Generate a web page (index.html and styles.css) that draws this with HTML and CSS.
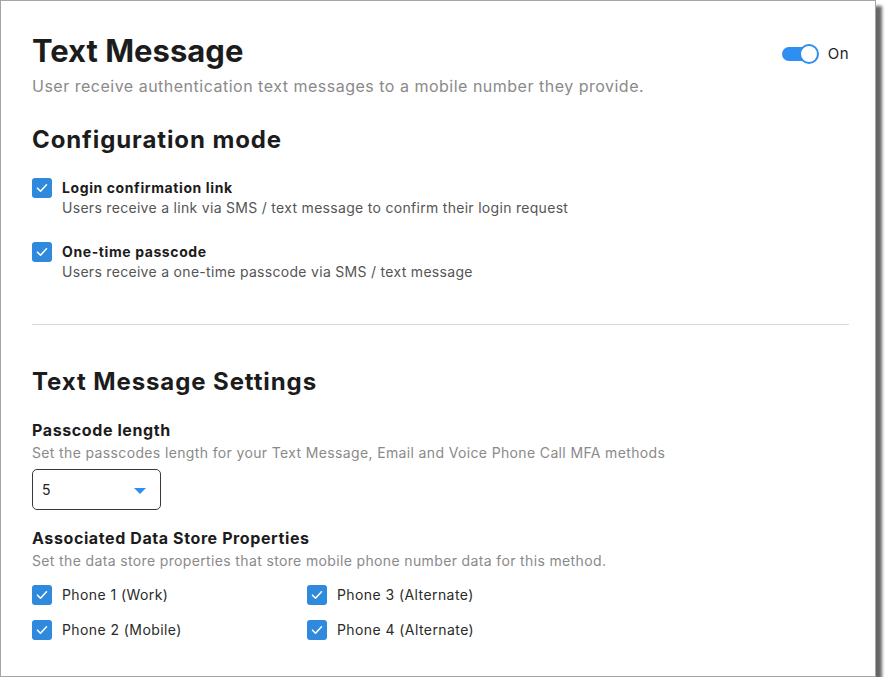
FILE: index.html
```html
<!DOCTYPE html>
<html lang="en">
<head>
    <meta charset="UTF-8">
    <title>Text Message MFA</title>
    <link rel="stylesheet" href="styles.css">
</head>
<body>
    <div class="card">
        <!-- Cabecera con el interruptor -->
        <header class="card-header">
            <div>
                <h1 class="title">Text Message</h1>
                <p class="subtitle">User receive authentication text messages to a mobile number they provide.</p>
            </div>
            <div class="toggle">
                <span class="toggle-track"><span class="toggle-knob"></span></span>
                <span class="toggle-label">On</span>
            </div>
        </header>

        <section class="config">
            <h2 class="section-title">Configuration mode</h2>

            <div class="option">
                <span class="checkbox">
                    <svg viewBox="0 0 20 20"><path d="M5.5 10.2l3 3 6-6.4"/></svg>
                </span>
                <div>
                    <p class="option-title">Login confirmation link</p>
                    <p class="option-desc">Users receive a link via SMS / text message to confirm their login request</p>
                </div>
            </div>

            <div class="option">
                <span class="checkbox">
                    <svg viewBox="0 0 20 20"><path d="M5.5 10.2l3 3 6-6.4"/></svg>
                </span>
                <div>
                    <p class="option-title">One-time passcode</p>
                    <p class="option-desc">Users receive a one-time passcode via SMS / text message</p>
                </div>
            </div>
        </section>

        <hr class="divider">

        <section class="settings">
            <h2 class="section-title">Text Message Settings</h2>

            <div class="field">
                <h3 class="field-title">Passcode length</h3>
                <p class="field-help">Set the passcodes length for your Text Message, Email and Voice Phone Call MFA methods</p>
                <div class="select">
                    <span>5</span>
                    <span class="select-arrow"></span>
                </div>
            </div>

            <div class="field field-props">
                <h3 class="field-title">Associated Data Store Properties</h3>
                <p class="field-help">Set the data store properties that store mobile phone number data for this method.</p>
                <div class="phone-grid">
                    <label class="phone">
                        <span class="checkbox"><svg viewBox="0 0 20 20"><path d="M5.5 10.2l3 3 6-6.4"/></svg></span>
                        Phone 1 (Work)
                    </label>
                    <label class="phone">
                        <span class="checkbox"><svg viewBox="0 0 20 20"><path d="M5.5 10.2l3 3 6-6.4"/></svg></span>
                        Phone 3 (Alternate)
                    </label>
                    <label class="phone">
                        <span class="checkbox"><svg viewBox="0 0 20 20"><path d="M5.5 10.2l3 3 6-6.4"/></svg></span>
                        Phone 2 (Mobile)
                    </label>
                    <label class="phone">
                        <span class="checkbox"><svg viewBox="0 0 20 20"><path d="M5.5 10.2l3 3 6-6.4"/></svg></span>
                        Phone 4 (Alternate)
                    </label>
                </div>
            </div>
        </section>
    </div>
</body>
</html>
```

FILE: styles.css
```css
/* Reset */
* {
    margin: 0;
    padding: 0;
    box-sizing: border-box;
}

body {
    font-family: 'Inter', 'Liberation Sans', sans-serif;
    background: #ffffff;
    color: #222;
}

/* Tarjeta principal */
.card {
    width: 876px;
    height: 677px;
    background: #ffffff;
    border: 1px solid #a5a5a5;
    box-shadow: 6px 6px 3px rgba(0, 0, 0, 0.6);
    padding: 31px 26px 0 31px;
}

.card-header {
    display: flex;
    justify-content: space-between;
    align-items: flex-start;
}

.title {
    font-size: 31px;
    line-height: 38px;
    font-weight: 700;
    color: #1c1c1c;
}

.subtitle {
    margin-top: 5px;
    font-size: 16px;
    line-height: 22px;
    letter-spacing: 0.5px;
    color: #8a8a8a;
}

/* Interruptor */
.toggle {
    display: flex;
    align-items: center;
    gap: 10px;
    margin-top: 12px;
}

.toggle-track {
    position: relative;
    width: 36px;
    height: 14px;
    border-radius: 7px;
    background: #2f8ff0;
}

.toggle-knob {
    position: absolute;
    right: -1px;
    top: -3px;
    width: 20px;
    height: 20px;
    border-radius: 50%;
    background: #fff;
    border: 2px solid #2f8ff0;
}

.toggle-label {
    font-size: 15px;
    letter-spacing: 0.4px;
    color: #222;
}

/* Titulos de seccion */
.section-title {
    font-size: 24px;
    line-height: 30px;
    font-weight: 700;
    letter-spacing: 0.9px;
    color: #1c1c1c;
}

.config {
    margin-top: 28px;
}

.option {
    display: flex;
    gap: 10px;
    margin-top: 24px;
}

.config .section-title + .option {
    margin-top: 23px;
}

.checkbox {
    flex: none;
    width: 20px;
    height: 20px;
    border-radius: 3px;
    background: #2f89dc;
    display: flex;
}

.checkbox svg {
    width: 20px;
    height: 20px;
    fill: none;
    stroke: #fff;
    stroke-width: 1.6;
    stroke-linecap: round;
    stroke-linejoin: round;
}

.option-title {
    font-size: 14px;
    line-height: 20px;
    font-weight: 700;
    letter-spacing: 0.6px;
    color: #1c1c1c;
}

.option-desc {
    font-size: 14px;
    line-height: 20px;
    letter-spacing: 0.3px;
    color: #555;
}

.divider {
    border: none;
    border-top: 1px solid #d6dadd;
    margin-top: 42px;
}

.settings {
    margin-top: 42px;
}

.field {
    margin-top: 22px;
}

.field-props {
    margin-top: 17px;
}

.field-title {
    font-size: 16px;
    line-height: 22px;
    font-weight: 700;
    letter-spacing: 0.6px;
    color: #1c1c1c;
}

.field-help {
    margin-top: 2px;
    font-size: 14px;
    line-height: 20px;
    letter-spacing: 0.36px;
    color: #8a8a8a;
}

/* Selector */
.select {
    margin-top: 6px;
    width: 129px;
    height: 41px;
    border: 1px solid #3a3a3a;
    border-radius: 5px;
    display: flex;
    align-items: center;
    justify-content: space-between;
    padding: 0 14px 0 9px;
    font-size: 14px;
    color: #222;
}

.select-arrow {
    width: 0;
    height: 0;
    border-left: 6px solid transparent;
    border-right: 6px solid transparent;
    border-top: 6px solid #2f8ff0;
    margin-top: 2px;
}

/* Propiedades de telefono */
.phone-grid {
    margin-top: 14px;
    display: grid;
    grid-template-columns: 275px 275px;
    row-gap: 15px;
}

.phone {
    display: flex;
    align-items: center;
    gap: 10px;
    font-size: 14px;
    line-height: 20px;
    letter-spacing: 0.42px;
    color: #2a2a2a;
}
```
